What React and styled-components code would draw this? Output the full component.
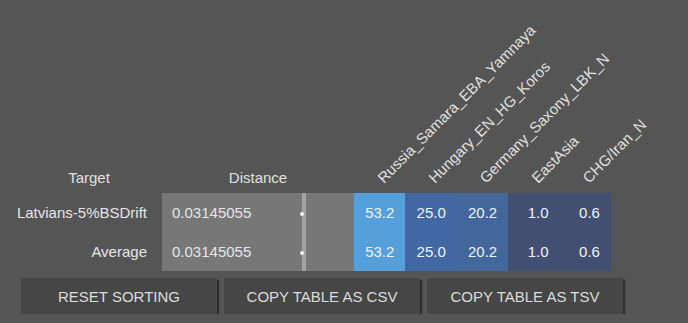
import React from 'react';
import styled, {createGlobalStyle} from 'styled-components';

const GlobalStyle = createGlobalStyle`
    html, body {
        margin: 0;
        padding: 0;
        background: #555555;
        font-family: "Liberation Sans", Arial, sans-serif;
        font-size: 15px;
        color: #e4e4e4;
    }
`;

const Page = styled.div`
    padding-left: 16px;
`;

const Grid = styled.div`
    display: grid;
    grid-template-columns: 146px 140px 4px 48px repeat(5, 51.4px);
    grid-template-rows: 193px 39px 39px;
`;

const HeadCell = styled.div`
    grid-column: ${p => p.span || 'auto'};
    display: flex;
    align-items: flex-end;
    justify-content: center;
    padding-bottom: 7px;
    box-sizing: border-box;
    color: #e0e0e0;
`;

const RotHead = styled.div`
    position: relative;
`;

const RotLabel = styled.span`
    position: absolute;
    left: calc(50% + 6px);
    bottom: 7px;
    line-height: 17px;
    white-space: nowrap;
    transform-origin: left bottom;
    transform: rotate(-45deg);
    color: #e0e0e0;
`;

const TargetCell = styled.div`
    display: flex;
    align-items: center;
    justify-content: flex-end;
    padding-right: 15px;
    color: #e6e6e6;
`;

const DistCell = styled.div`
    display: flex;
    align-items: center;
    padding-left: 10px;
    background: #777777;
    color: #e6e6e6;
`;

const Divider = styled.div`
    position: relative;
    background: #a3a3a3;
`;

const Thumb = styled.span`
    position: absolute;
    left: -2px;
    top: 50%;
    width: 4px;
    height: 4px;
    margin-top: -1px;
    border-radius: 50%;
    background: #eef0f4;
`;

const Spacer = styled.div`
    background: #777777;
`;

const ValueCell = styled.div`
    display: flex;
    align-items: center;
    justify-content: flex-end;
    padding-right: 11px;
    background: ${p => p.bg};
    color: #f2f2f2;
`;

const ButtonRow = styled.div`
    display: flex;
    gap: 7px;
    padding: 7px 0 0 5px;
`;

const Button = styled.button`
    width: 196px;
    height: 36px;
    border: none;
    background: #464646;
    box-shadow: 2px 2px 1px #2e2e2e;
    color: #dcdcdc;
    font-family: "Liberation Sans", Arial, sans-serif;
    font-size: 15px;
    text-transform: uppercase;
    cursor: pointer;
`;

const columns = [
    {name: 'Russia_Samara_EBA_Yamnaya', bg: '#55a0da'},
    {name: 'Hungary_EN_HG_Koros', bg: '#4168a2'},
    {name: 'Germany_Saxony_LBK_N', bg: '#43679a'},
    {name: 'EastAsia', bg: '#434f72'},
    {name: 'CHG/Iran_N', bg: '#434f72'}
];

const rows = [
    {target: 'Latvians-5%BSDrift', distance: '0.03145055', values: ['53.2', '25.0', '20.2', '1.0', '0.6']},
    {target: 'Average', distance: '0.03145055', values: ['53.2', '25.0', '20.2', '1.0', '0.6']}
];

const App = () => (
    <Page>
        <GlobalStyle/>
        <Grid>
            <HeadCell>Target</HeadCell>
            <HeadCell span="span 3">Distance</HeadCell>
            {columns.map(c => (
                <RotHead key={c.name}>
                    <RotLabel>{c.name}</RotLabel>
                </RotHead>
            ))}
            {rows.map((r, i) => (
                <React.Fragment key={i}>
                    <TargetCell>{r.target}</TargetCell>
                    <DistCell>{r.distance}</DistCell>
                    <Divider><Thumb/></Divider>
                    <Spacer/>
                    {r.values.map((v, j) => (
                        <ValueCell key={j} bg={columns[j].bg}>{v}</ValueCell>
                    ))}
                </React.Fragment>
            ))}
        </Grid>
        <ButtonRow>
            <Button>Reset sorting</Button>
            <Button>Copy table as CSV</Button>
            <Button>Copy table as TSV</Button>
        </ButtonRow>
    </Page>
);

export default App;
